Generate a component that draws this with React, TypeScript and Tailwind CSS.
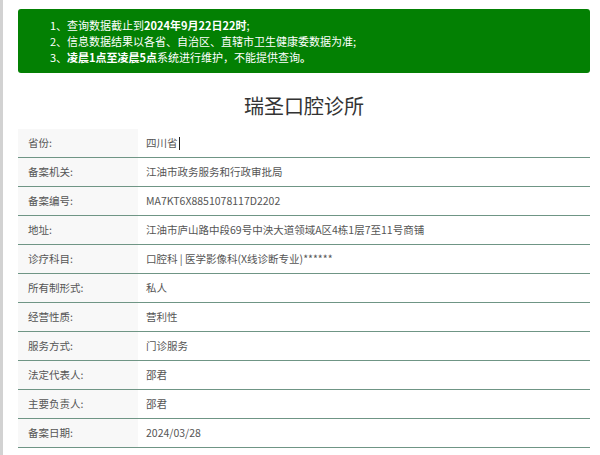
import React from "react";

const rows: [string, string][] = [
  ["省份:", "四川省"],
  ["备案机关:", "江油市政务服务和行政审批局"],
  ["备案编号:", "MA7KT6X8851078117D2202"],
  ["地址:", "江油市庐山路中段69号中泱大道领域A区4栋1层7至11号商铺"],
  ["诊疗科目:", "口腔科 | 医学影像科(X线诊断专业)******"],
  ["所有制形式:", "私人"],
  ["经营性质:", "营利性"],
  ["服务方式:", "门诊服务"],
  ["法定代表人:", "邵君"],
  ["主要负责人:", "邵君"],
  ["备案日期:", "2024/03/28"],
];

export default function App() {
  return (
    <div
      className="h-[455px] overflow-hidden border-l-[3px] border-[#d2d2d2] bg-white pl-[15px] pr-[10px]"
      style={{ fontFamily: '"Noto Sans CJK SC", "Noto Sans", sans-serif' }}
    >
      <div className="mt-[9px] rounded-[3px] bg-[#038003] py-[8px] pl-[32px] text-[11px] leading-4 text-white">
        <p>
          1、查询数据截止到<b>2024年9月22日22时</b>;
        </p>
        <p>2、信息数据结果以各省、自治区、直辖市卫生健康委数据为准;</p>
        <p>
          3、<b>凌晨1点至凌晨5点</b>系统进行维护，不能提供查询<b>。</b>
        </p>
      </div>

      <h1 className="mt-[19px] mb-[9px] text-center text-[20px] leading-7 text-[#333]">
        瑞圣口腔诊所
      </h1>

      <div className="text-[10.5px] text-[#555]">
        {rows.map(([label, value], i) => (
          <div key={label} className="flex h-[29px] border-b border-[#6f9585]">
            <div className="flex w-[120px] items-center bg-[#f8f8f8] pl-[10px]">{label}</div>
            <div className="flex items-center pl-[8px]">
              {value}
              {i === 0 && <span className="ml-px inline-block h-[13px] w-px bg-[#222]" />}
            </div>
          </div>
        ))}
      </div>
    </div>
  );
}
